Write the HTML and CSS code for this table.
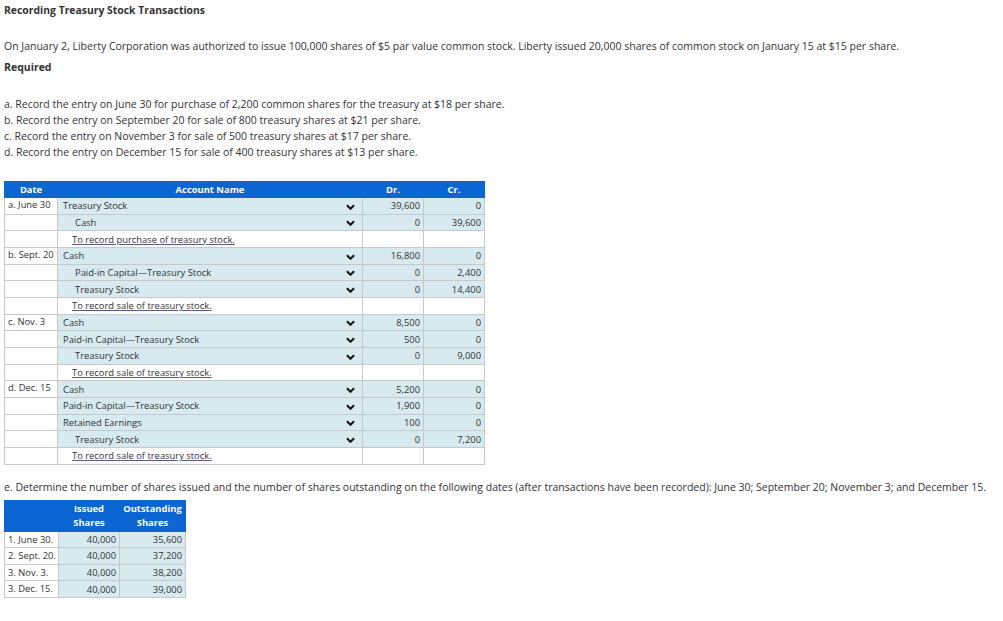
FILE: index.html
```html
<!DOCTYPE html>
<html>
<head>
<meta charset="utf-8">
<link rel="stylesheet" href="styles.css">
</head>
<body>
<div class="page">
  <h1 class="title">Recording Treasury Stock Transactions</h1>
  <p class="intro">On January 2, Liberty Corporation was authorized to issue 100,000 shares of $5 par value common stock. Liberty issued 20,000 shares of common stock on January 15 at $15 per share.</p>
  <p class="required">Required</p>
  <ul class="tasks">
    <li>a. Record the entry on June 30 for purchase of 2,200 common shares for the treasury at $18 per share.</li>
    <li>b. Record the entry on September 20 for sale of 800 treasury shares at $21 per share.</li>
    <li>c. Record the entry on November 3 for sale of 500 treasury shares at $17 per share.</li>
    <li>d. Record the entry on December 15 for sale of 400 treasury shares at $13 per share.</li>
  </ul>

  <table class="journal">
    <colgroup><col class="c-date"><col class="c-acct"><col class="c-num"><col class="c-num"></colgroup>
    <thead>
      <tr><th>Date</th><th>Account Name</th><th>Dr.</th><th>Cr.</th></tr>
    </thead>
    <tbody>
      <tr><td class="date">a. June 30</td><td class="acct"><span class="dr">Treasury Stock</span><svg class="chev" viewBox="0 0 10 6"><polyline points="1,1 5,5 9,1"/></svg></td><td class="num">39,600</td><td class="num">0</td></tr>
      <tr><td class="date"></td><td class="acct"><span class="cr">Cash</span><svg class="chev" viewBox="0 0 10 6"><polyline points="1,1 5,5 9,1"/></svg></td><td class="num">0</td><td class="num">39,600</td></tr>
      <tr class="memo"><td class="date"></td><td class="acct"><span class="note">To record purchase of treasury stock.</span></td><td class="num"></td><td class="num"></td></tr>

      <tr><td class="date">b. Sept. 20</td><td class="acct"><span class="dr">Cash</span><svg class="chev" viewBox="0 0 10 6"><polyline points="1,1 5,5 9,1"/></svg></td><td class="num">16,800</td><td class="num">0</td></tr>
      <tr><td class="date"></td><td class="acct"><span class="cr">Paid-in Capital—Treasury Stock</span><svg class="chev" viewBox="0 0 10 6"><polyline points="1,1 5,5 9,1"/></svg></td><td class="num">0</td><td class="num">2,400</td></tr>
      <tr><td class="date"></td><td class="acct"><span class="cr">Treasury Stock</span><svg class="chev" viewBox="0 0 10 6"><polyline points="1,1 5,5 9,1"/></svg></td><td class="num">0</td><td class="num">14,400</td></tr>
      <tr class="memo"><td class="date"></td><td class="acct"><span class="note">To record sale of treasury stock.</span></td><td class="num"></td><td class="num"></td></tr>

      <tr><td class="date">c. Nov. 3</td><td class="acct"><span class="dr">Cash</span><svg class="chev" viewBox="0 0 10 6"><polyline points="1,1 5,5 9,1"/></svg></td><td class="num">8,500</td><td class="num">0</td></tr>
      <tr><td class="date"></td><td class="acct"><span class="dr">Paid-in Capital—Treasury Stock</span><svg class="chev" viewBox="0 0 10 6"><polyline points="1,1 5,5 9,1"/></svg></td><td class="num">500</td><td class="num">0</td></tr>
      <tr><td class="date"></td><td class="acct"><span class="cr">Treasury Stock</span><svg class="chev" viewBox="0 0 10 6"><polyline points="1,1 5,5 9,1"/></svg></td><td class="num">0</td><td class="num">9,000</td></tr>
      <tr class="memo"><td class="date"></td><td class="acct"><span class="note">To record sale of treasury stock.</span></td><td class="num"></td><td class="num"></td></tr>

      <tr><td class="date">d. Dec. 15</td><td class="acct"><span class="dr">Cash</span><svg class="chev" viewBox="0 0 10 6"><polyline points="1,1 5,5 9,1"/></svg></td><td class="num">5,200</td><td class="num">0</td></tr>
      <tr><td class="date"></td><td class="acct"><span class="dr">Paid-in Capital—Treasury Stock</span><svg class="chev" viewBox="0 0 10 6"><polyline points="1,1 5,5 9,1"/></svg></td><td class="num">1,900</td><td class="num">0</td></tr>
      <tr><td class="date"></td><td class="acct"><span class="dr">Retained Earnings</span><svg class="chev" viewBox="0 0 10 6"><polyline points="1,1 5,5 9,1"/></svg></td><td class="num">100</td><td class="num">0</td></tr>
      <tr><td class="date"></td><td class="acct"><span class="cr">Treasury Stock</span><svg class="chev" viewBox="0 0 10 6"><polyline points="1,1 5,5 9,1"/></svg></td><td class="num">0</td><td class="num">7,200</td></tr>
      <tr class="memo"><td class="date"></td><td class="acct"><span class="note">To record sale of treasury stock.</span></td><td class="num"></td><td class="num"></td></tr>
    </tbody>
  </table>

  <p class="part-e">e. Determine the number of shares issued and the number of shares outstanding on the following dates (after transactions have been recorded): June 30; September 20; November 3; and December 15.</p>

  <table class="shares">
    <colgroup><col class="s-date"><col class="s-iss"><col class="s-out"></colgroup>
    <thead>
      <tr><th></th><th>Issued<br>Shares</th><th>Outstanding<br>Shares</th></tr>
    </thead>
    <tbody>
      <tr><td class="date">1. June 30.</td><td class="num">40,000</td><td class="num">35,600</td></tr>
      <tr><td class="date">2. Sept. 20.</td><td class="num">40,000</td><td class="num">37,200</td></tr>
      <tr><td class="date">3. Nov. 3.</td><td class="num">40,000</td><td class="num">38,200</td></tr>
      <tr><td class="date">3. Dec. 15.</td><td class="num">40,000</td><td class="num">39,000</td></tr>
    </tbody>
  </table>
</div>
</body>
</html>
```

FILE: styles.css
```css
html, body {
  margin: 0;
  padding: 0;
  background: #ffffff;
}

body {
  font-family: "Open Sans", "Noto Sans", sans-serif;
  color: #333333;
}

.page {
  padding: 3px 0 0 4px;
}

.title {
  font-size: 10.4px;
  font-weight: 700;
  margin: 0;
  line-height: 15px;
  color: #333333;
}

.intro {
  font-size: 10.5px;
  line-height: 15px;
  margin: 21px 0 0 0;
}

.required {
  font-size: 10.5px;
  font-weight: 700;
  line-height: 15px;
  margin: 6px 0 0 0;
}

.tasks {
  list-style: none;
  margin: 21px 0 0 0;
  padding: 0;
  font-size: 10.5px;
  line-height: 16px;
}

.journal,
.shares {
  border-collapse: collapse;
  table-layout: fixed;
  font-size: 9.4px;
}

.journal {
  margin-top: 21px;
  width: 481px;
}

.c-date { width: 53px; }
.c-acct { width: 305px; }
.c-num { width: 61px; }

.journal th,
.shares th {
  background: #0b66d3;
  color: #ffffff;
  font-weight: 700;
  text-align: center;
  padding: 0;
  border: 1px solid #0b66d3;
}

.journal thead tr {
  height: 16px;
}

.journal tbody tr {
  height: 16.67px;
}

.journal td,
.shares td {
  border: 1px solid #c8c8c8;
  padding: 0;
  vertical-align: middle;
  background: #d6eaf0;
  white-space: nowrap;
}

.journal td.date,
.shares td.date {
  background: #ffffff;
  vertical-align: top;
  padding-left: 3px;
  line-height: 14px;
}

.journal tr.memo td {
  background: #ffffff;
}

.acct {
  position: relative;
}

.acct .dr {
  padding-left: 5px;
}

.acct .cr {
  padding-left: 17px;
}

.acct .note {
  padding-left: 14px;
  text-decoration: underline;
  text-decoration-color: #555e80;
}

.chev {
  position: absolute;
  right: 7px;
  top: 50%;
  width: 9px;
  height: 6px;
  margin-top: -2px;
}

.chev polyline {
  fill: none;
  stroke: #111111;
  stroke-width: 2.2;
}

.num {
  text-align: right;
  padding-right: 3px !important;
}

.part-e {
  font-size: 10.5px;
  line-height: 15px;
  margin: 15px 0 0 0;
}

.shares {
  margin-top: 5px;
  width: 181px;
}

.s-date { width: 54px; }
.s-iss { width: 61px; }
.s-out { width: 66px; }

.shares thead tr {
  height: 31px;
}

.shares th {
  line-height: 14px;
}

.shares tbody tr {
  height: 16.67px;
}

.shares td.date {
  line-height: 15px;
}
```
